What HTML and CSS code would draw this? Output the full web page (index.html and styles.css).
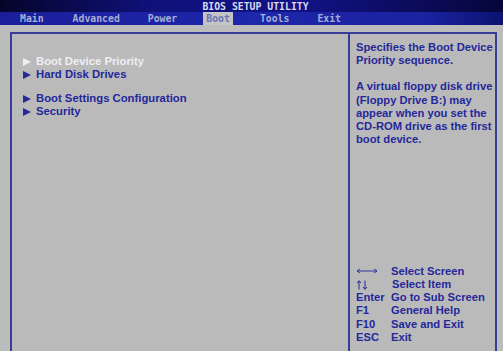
FILE: index.html
```html
<!DOCTYPE html>
<html>
<head>
<meta charset="utf-8">
<link rel="stylesheet" href="styles.css">
</head>
<body>
<div class="screen">
  <header class="head">
    <div class="title">BIOS SETUP UTILITY</div>
    <nav class="tabs">
      <span class="tab t-main">Main</span>
      <span class="tab t-adv">Advanced</span>
      <span class="tab t-pow">Power</span>
      <span class="tab t-boot active">Boot</span>
      <span class="tab t-tools">Tools</span>
      <span class="tab t-exit">Exit</span>
    </nav>
  </header>
  <main class="body">
    <div class="box">
      <section class="menu">
        <div class="group">
          <div class="item sel"><span class="arr"></span>Boot Device Priority</div>
          <div class="item"><span class="arr"></span>Hard Disk Drives</div>
        </div>
        <div class="group">
          <div class="item"><span class="arr"></span>Boot Settings Configuration</div>
          <div class="item"><span class="arr"></span>Security</div>
        </div>
      </section>
      <aside class="side">
        <div class="help">
          <p>Specifies the Boot Device Priority sequence.</p>
          <p>A virtual floppy disk drive (Floppy Drive B:) may appear when you set the CD-ROM drive as the first boot device.</p>
        </div>
        <div class="keys">
          <div class="k"><span class="key"><svg class="ico" width="22" height="6" viewBox="0 0 22 6"><path d="M1 3H21M1 3L4 1M1 3L4 5M21 3L18 1M21 3L18 5" stroke="#24289a" stroke-width="0.9" fill="none"/></svg></span><span class="d">Select Screen</span></div>
          <div class="k"><span class="key"><svg class="ico" width="12" height="10" viewBox="0 0 12 10"><path d="M3 9.5V0.8M3 0.8L1 3M3 0.8L5 3M9 0.5V9.2M9 9.2L7 7M9 9.2L11 7" stroke="#24289a" stroke-width="1" fill="none"/></svg></span><span class="d d2">Select Item</span></div>
          <div class="k"><span class="key">Enter</span><span class="d">Go to Sub Screen</span></div>
          <div class="k"><span class="key">F1</span><span class="d">General Help</span></div>
          <div class="k"><span class="key">F10</span><span class="d">Save and Exit</span></div>
          <div class="k"><span class="key">ESC</span><span class="d">Exit</span></div>
        </div>
      </aside>
    </div>
  </main>
</div>
</body>
</html>
```
FILE: styles.css
```css
* { box-sizing: border-box; margin: 0; padding: 0; }
html, body { width: 503px; height: 351px; overflow: hidden; }
body { background: #bcbcbc; font-family: "Liberation Sans", Arial, sans-serif; }
.screen { width: 503px; height: 351px; display: flex; flex-direction: column; }
.head {
  height: 25px;
  background: linear-gradient(90deg, #05052a 0%, #10107a 30%, #121286 60%, #06063a 100%);
}
.title {
  height: 12px;
  text-align: center;
  font-family: "DejaVu Sans Mono", monospace;
  font-weight: bold;
  font-size: 9.8px;
  line-height: 14px;
  color: #d8dcf0;
  padding-left: 8px;
}
.tabs {
  height: 13px;
  background: linear-gradient(90deg, #1a1e9a 0%, #1e26aa 50%, #1a22a0 85%, #0c1270 100%);
  display: flex;
  font-family: "DejaVu Sans Mono", monospace;
  font-weight: bold;
  font-size: 9.8px;
  line-height: 13px;
  color: #a6aed6;
}
.tab { display: block; padding: 0 3px; }
.t-main { margin-left: 17px; }
.t-adv { margin-left: 23px; }
.t-pow { margin-left: 22px; }
.t-boot { margin-left: 23px; }
.t-tools { margin-left: 24px; }
.t-exit { margin-left: 22px; }
.tab.active { background: #c4c4c4; color: #6a74b6; padding: 0 3px; height: 13px; }
.body { flex: 1; padding: 7px 6px 0 10px; background: #bcbcbc; min-height: 0; }
.box {
  height: 100%;
  border: 2px solid #3a3c9c;
  border-bottom: none;
  display: flex;
  background: #bababa;
}
.menu {
  flex: 0 0 338px;
  border-right: 2px solid #3a3c9c;
  padding: 21px 0 0 11px;
  color: #24289a;
  font-weight: bold;
  font-size: 11.3px;
  line-height: 13px;
}
.group { margin-bottom: 11px; }
.item { white-space: nowrap; display: flex; align-items: center; }
.item.sel { color: #eeeef4; }
.arr {
  display: inline-block;
  width: 0; height: 0;
  border-left: 8px solid currentColor;
  border-top: 4px solid transparent;
  border-bottom: 4px solid transparent;
  margin-right: 5px;
}
.side {
  flex: 1 1 auto;
  min-width: 0;
  display: flex;
  flex-direction: column;
  justify-content: space-between;
  padding: 7px 0 7px 6px;
  color: #24289a;
  font-weight: bold;
  font-size: 11.2px;
  line-height: 13.2px;
}
.help p { margin-bottom: 13px; }
.k { display: flex; white-space: nowrap; align-items: center; height: 13.2px; }
.key { width: 35px; display: flex; align-items: center; }
.ico { display: block; }
.d2 { padding-left: 1px; }
```
